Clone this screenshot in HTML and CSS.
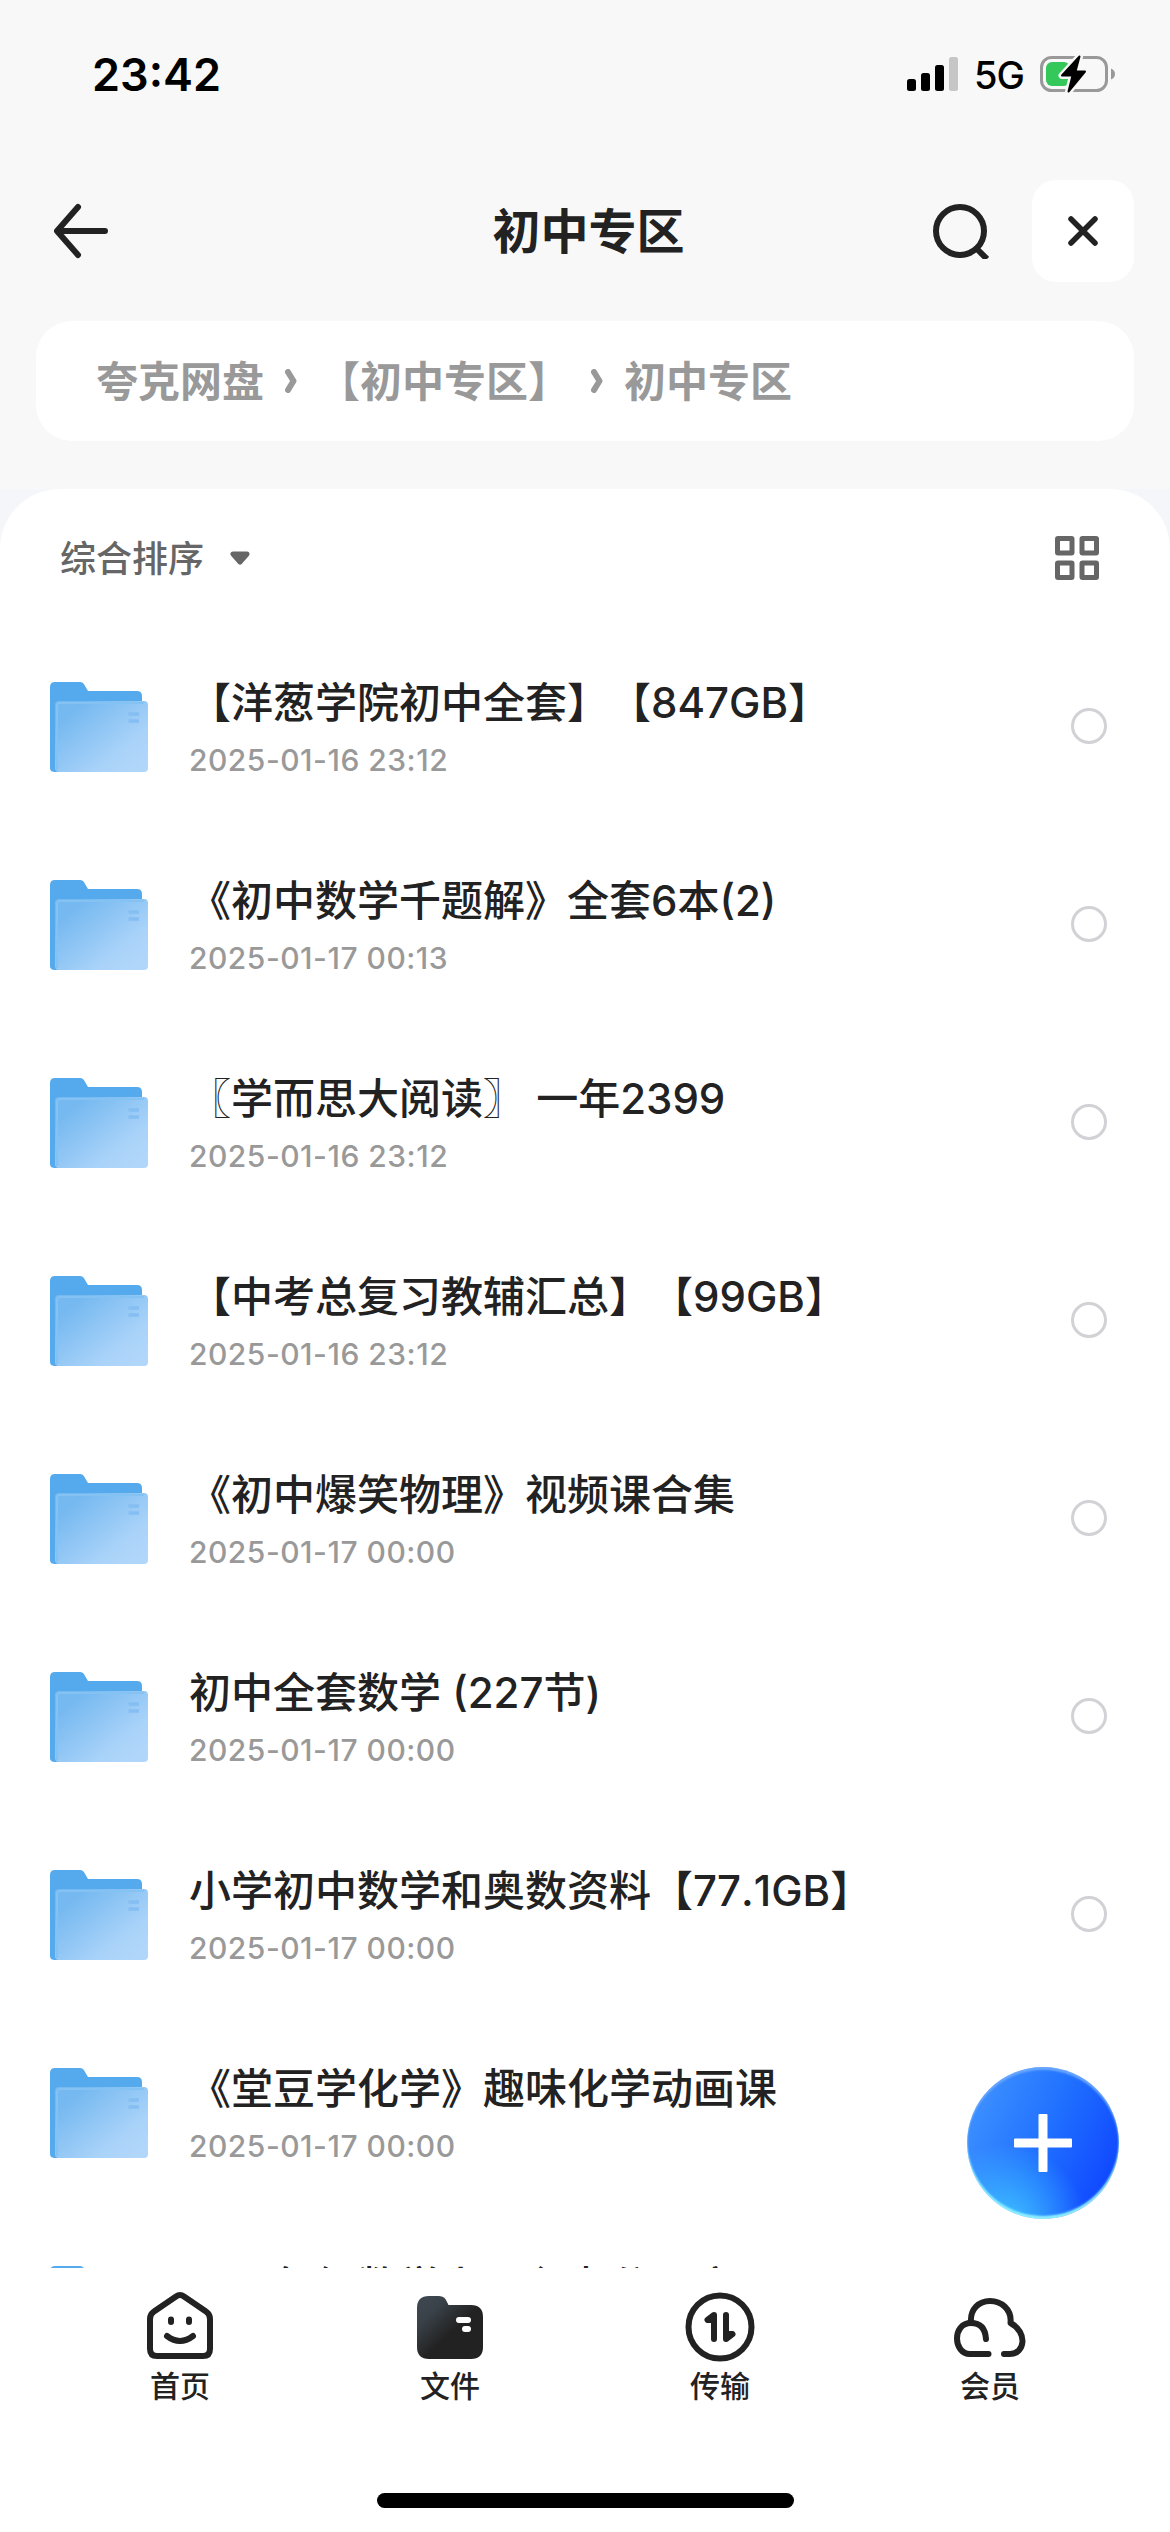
FILE: index.html
```html
<!DOCTYPE html>
<html lang="zh-CN">
<head>
    <meta charset="UTF-8">
    <meta name="viewport" content="width=device-width, initial-scale=1.0">
    <title>初中专区</title>
    <link rel="stylesheet" href="styles.css">
</head>
<body>
    <svg class="defs" width="0" height="0">
        <defs>
            <linearGradient id="cover" x1="0.15" y1="0.2" x2="0.9" y2="0.9">
                <stop offset="0" stop-color="#76b9f0"/>
                <stop offset="0.75" stop-color="#aad3f9"/>
                <stop offset="1" stop-color="#b0d6fa"/>
            </linearGradient>
            <linearGradient id="dark" x1="0.1" y1="0.1" x2="0.55" y2="0.55">
                <stop offset="0" stop-color="#3d464e"/>
                <stop offset="0.3" stop-color="#3a4249"/>
                <stop offset="1" stop-color="#222"/>
            </linearGradient>
        </defs>
        <symbol id="folder" viewBox="0 0 98 90">
            <path d="M0 5Q0 0 5 0H30Q33 0 34.500 3L38 9H87Q92 9 92 14V60H8V90H5Q0 90 0 86Z" fill="#55aaee"/>
            <rect x="5" y="19" width="93" height="71" rx="4" fill="url(#cover)"/>
            <path d="M7 88V24Q7 21 10 21H94" fill="none" stroke="#84c2f3" stroke-width="2"/>
            <path d="M78.500 32H89M78.500 39H89" stroke="#85bef2" stroke-width="3.500"/>
        </symbol>
    </svg>

    <div class="app">
        <div class="status">
            <span class="time">23:42</span>
            <div class="signals">
                <svg width="51" height="34" viewBox="0 0 51 34">
                    <rect x="0" y="22" width="9" height="12" rx="2.500"/>
                    <rect x="14" y="16" width="9" height="18" rx="2.500"/>
                    <rect x="28" y="8" width="9" height="26" rx="2.500"/>
                    <rect x="42" y="0" width="9" height="34" rx="2.500" fill="#c6c6c6"/>
                </svg>
                <span class="net">5G</span>
                <svg width="75" height="38" viewBox="0 0 75 38">
                    <rect x="1.500" y="2.500" width="65" height="33" rx="10" fill="none" stroke="#999" stroke-width="3"/>
                    <path d="M71 13.500Q75 15 75 19T71 24.500Z" fill="#999"/>
                    <rect x="6" y="7" width="24" height="24" rx="6" fill="#34c759"/>
                    <path d="M39.500 1.500L22 20.500H32.500L28.500 36.500L45 16.500H35.500Z" stroke="#f8f8f8" stroke-width="7" fill="#f8f8f8" stroke-linejoin="round"/>
                    <path d="M39.500 1.500L22 20.500H32.500L28.500 36.500L45 16.500H35.500Z" stroke="#000" stroke-width="2" stroke-linejoin="round"/>
                </svg>
            </div>
        </div>

        <div class="header">
            <svg class="back" width="54" height="56" viewBox="0 0 54 56" fill="none" stroke="#222" stroke-width="6" stroke-linecap="round" stroke-linejoin="round">
                <path d="M24 4L3 28L24 52M4 28H51"/>
            </svg>
            <h1>初中专区</h1>
            <svg class="search" width="56" height="56" viewBox="0 0 56 56" fill="none" stroke="#222" stroke-width="6">
                <circle cx="27" cy="28" r="24"/>
                <path d="M44 46L54 56"/>
            </svg>
            <button class="close">
                <svg width="30" height="30" viewBox="0 0 30 30" stroke="#222" stroke-width="5.500" stroke-linecap="round">
                    <path d="M3 3L27 27M27 3L3 27"/>
                </svg>
            </button>
        </div>

        <div class="crumbs">
            <span>夸克网盘</span>
            <svg width="12" height="24" viewBox="0 0 12 24"><path d="M3 3L8.500 12L3 21"/></svg>
            <span>【初中专区】</span>
            <svg width="12" height="24" viewBox="0 0 12 24"><path d="M3 3L8.500 12L3 21"/></svg>
            <span>初中专区</span>
        </div>

        <div class="backdrop">
            <div class="panel">
                <div class="toolbar">
                    <span>综合排序</span>
                    <svg width="20" height="14" viewBox="0 0 20 14"><path d="M3 3H17L10 11Z" fill="#666" stroke="#666" stroke-width="5" stroke-linejoin="round"/></svg>
                    <svg class="grid" width="44" height="44" viewBox="0 0 44 44" fill="none" stroke="#666" stroke-width="5">
                        <rect x="2.500" y="2.500" width="14.500" height="14.500" rx="0.500"/>
                        <rect x="27" y="2.500" width="14.500" height="14.500" rx="0.500"/>
                        <rect x="2.500" y="27" width="14.500" height="14.500" rx="0.500"/>
                        <rect x="27" y="27" width="14.500" height="14.500" rx="0.500"/>
                    </svg>
                </div>

                <ul class="files">
                    <li><svg class="folder"><use href="#folder"/></svg><div class="info"><p class="name">【洋葱学院初中全套】【847GB】</p><p class="date">2025-01-16 23:12</p></div><i class="check"></i></li>
                    <li><svg class="folder"><use href="#folder"/></svg><div class="info"><p class="name">《初中数学千题解》全套6本(2)</p><p class="date">2025-01-17 00:13</p></div><i class="check"></i></li>
                    <li><svg class="folder"><use href="#folder"/></svg><div class="info"><p class="name">〖学而思大阅读〗 一年2399</p><p class="date">2025-01-16 23:12</p></div><i class="check"></i></li>
                    <li><svg class="folder"><use href="#folder"/></svg><div class="info"><p class="name">【中考总复习教辅汇总】【99GB】</p><p class="date">2025-01-16 23:12</p></div><i class="check"></i></li>
                    <li><svg class="folder"><use href="#folder"/></svg><div class="info"><p class="name">《初中爆笑物理》视频课合集</p><p class="date">2025-01-17 00:00</p></div><i class="check"></i></li>
                    <li><svg class="folder"><use href="#folder"/></svg><div class="info"><p class="name">初中全套数学 (227节)</p><p class="date">2025-01-17 00:00</p></div><i class="check"></i></li>
                    <li><svg class="folder"><use href="#folder"/></svg><div class="info"><p class="name">小学初中数学和奥数资料【77.1GB】</p><p class="date">2025-01-17 00:00</p></div><i class="check"></i></li>
                    <li><svg class="folder"><use href="#folder"/></svg><div class="info"><p class="name">《堂豆学化学》趣味化学动画课</p><p class="date">2025-01-17 00:00</p></div></li>
                    <li><svg class="folder"><use href="#folder"/></svg><div class="info"><p class="name">一二年级数学上、必考分题库</p></div></li>
                </ul>
            </div>
        </div>

        <button class="add">
            <svg width="58" height="58" viewBox="0 0 58 58" fill="#fff">
                <rect x="0" y="24.500" width="58" height="9" rx="1"/>
                <rect x="24.500" y="0" width="9" height="58" rx="1"/>
            </svg>
        </button>

        <nav class="tabs">
            <a>
                <svg width="74" height="72" viewBox="0 0 74 72" fill="none" stroke="#222" stroke-width="6" stroke-linecap="round" stroke-linejoin="round">
                    <path d="M33 5.500Q37 2.500 41 5.500L63 20.500Q67 23 67 28V58Q67 65 60 65H14Q7 65 7 58V28Q7 23 11 20.500Z"/>
                    <path d="M28 28.500V31M46 28.500V31M24 45Q37 55 50 45"/>
                </svg>
                <span>首页</span>
            </a>
            <a>
                <svg width="74" height="72" viewBox="0 0 74 72">
                    <path d="M4 17Q4 5 16 5H26Q32 5 34 11L35.500 14H58Q70 14 70 26V56Q70 68 58 68H16Q4 68 4 56Z" fill="url(#dark)"/>
                    <rect x="43" y="26" width="15" height="6" rx="3" fill="#fff"/>
                    <rect x="49" y="35" width="9" height="6" rx="3" fill="#fff"/>
                </svg>
                <span>文件</span>
            </a>
            <a>
                <svg width="74" height="72" viewBox="0 0 74 72" fill="none" stroke="#222" stroke-width="6" stroke-linecap="round" stroke-linejoin="round">
                    <circle cx="37" cy="36" r="31.500"/>
                    <path d="M31 48V24L24.500 29H31M43 24V48L49.500 43H43"/>
                </svg>
                <span>传输</span>
            </a>
            <a>
                <svg width="74" height="72" viewBox="0 0 74 72" fill="none" stroke="#222" stroke-width="6" stroke-linecap="round" stroke-linejoin="round">
                    <path d="M18 31C17 18 26 10 37 10S59 18 57.500 32C75 41 72 63 57 63H51"/>
                    <path d="M35.500 63H17C0 63 -1 32 18 32Q32 32 33 48"/>
                </svg>
                <span>会员</span>
            </a>
        </nav>
        <div class="bottom"><div class="home-bar"></div></div>
    </div>
</body>
</html>
```

FILE: styles.css
```css
* {
    box-sizing: border-box;
}
body {
    margin: 0;
    font-family: Inter, "Noto Sans CJK SC", sans-serif;
    background-color: #f8f8f8;
    color: #222;
}
h1, p, ul {
    margin: 0;
    padding: 0;
}
svg {
    display: block;
    flex: none;
}
.defs {
    position: absolute;
}
.app {
    position: relative;
    display: flex;
    flex-direction: column;
    width: 1170px;
    height: 2532px;
    overflow: hidden;
}
.status {
    display: flex;
    justify-content: space-between;
    height: 148px;
    padding: 0 55px 0 92px;
    align-items: center;
    color: #000;
}
.time {
    font-size: 45px;
    font-weight: 600;
}
.signals {
    display: flex;
    align-items: center;
    gap: 16px;
}
.net {
    padding-top: 2px;
    font-size: 38px;
    font-weight: 500;
    letter-spacing: -1px;
}
.header {
    display: flex;
    align-items: center;
    height: 166px;
    padding: 0 36px 0 54px;
}
h1 {
    flex: 1;
    padding: 1px 130px 0 266px;
    text-align: center;
    font-size: 48px;
    line-height: 60px;
    font-weight: 600;
}
.search {
    margin-right: 43px;
}
.close {
    display: flex;
    align-items: center;
    justify-content: center;
    width: 102px;
    height: 102px;
    padding: 0;
    border: 0;
    border-radius: 24px;
    background: #fff;
}
.crumbs {
    display: flex;
    align-items: center;
    gap: 21px;
    height: 120px;
    margin: 7px 36px 48px;
    padding-left: 60px;
    border-radius: 36px;
    background: #fff;
    color: #999;
    font-size: 42px;
    font-weight: 600;
}
.crumbs span {
    padding-bottom: 5px;
}
.crumbs svg {
    fill: none;
    stroke: #999;
    stroke-width: 6;
    stroke-linecap: round;
    stroke-linejoin: round;
}
.backdrop {
    height: 1779px;
    background: #f4f6f9;
    overflow: hidden;
}
.panel {
    border-radius: 60px 60px 0 0;
    background: #fff;
}
.toolbar {
    display: flex;
    align-items: center;
    height: 138px;
    padding: 0 71px 0 60px;
    color: #666;
    font-size: 36px;
    font-weight: 500;
}
.toolbar span {
    margin-right: 26px;
    padding-bottom: 5px;
}
.grid {
    margin-left: auto;
}
.files {
    list-style: none;
}
.files li {
    display: flex;
    align-items: center;
    height: 198px;
    padding: 0 63px 0 50px;
}
.folder {
    width: 98px;
    height: 90px;
    margin-top: 2px;
}
.info {
    flex: 1;
    height: 108px;
    padding: 1px 0 0 41px;
}
.name {
    font-size: 42px;
    line-height: 60px;
    font-weight: 500;
    font-kerning: none;
    white-space: nowrap;
    text-spacing-trim: space-all;
}
.date {
    margin-top: 6px;
    font-size: 30px;
    line-height: 42px;
    font-weight: 500;
    letter-spacing: 0.5px;
    color: #999;
}
.check {
    width: 36px;
    height: 36px;
    border: 3.5px solid #d1d1d6;
    border-radius: 50%;
}
.add {
    position: absolute;
    right: 51px;
    top: 2067px;
    display: flex;
    align-items: center;
    justify-content: center;
    width: 152px;
    height: 152px;
    padding: 0;
    border: 0;
    border-radius: 50%;
    background:
        radial-gradient(circle at 25% 105%, #40c4ff 0%, rgba(64, 196, 255, 0) 42%),
        linear-gradient(115deg, #3a8cff 15%, #2070ff 50%, #1048ff 88%);
    box-shadow: inset 0 -3px 2px #8eefff, inset 0 3px 2px #68a6ff;
}
.tabs {
    display: grid;
    grid-template-columns: repeat(4, 270px);
    justify-content: center;
    height: 225px;
    padding-top: 23px;
    background: #fff;
}
.tabs a {
    display: flex;
    flex-direction: column;
    align-items: center;
    font-size: 30px;
    line-height: 44px;
    font-weight: 500;
}
.tabs span {
    margin-top: 1px;
}
.bottom {
    display: flex;
    justify-content: center;
    height: 39px;
    background: #fff;
}
.home-bar {
    width: 417px;
    height: 15px;
    border-radius: 8px;
    background: #000;
}
```
